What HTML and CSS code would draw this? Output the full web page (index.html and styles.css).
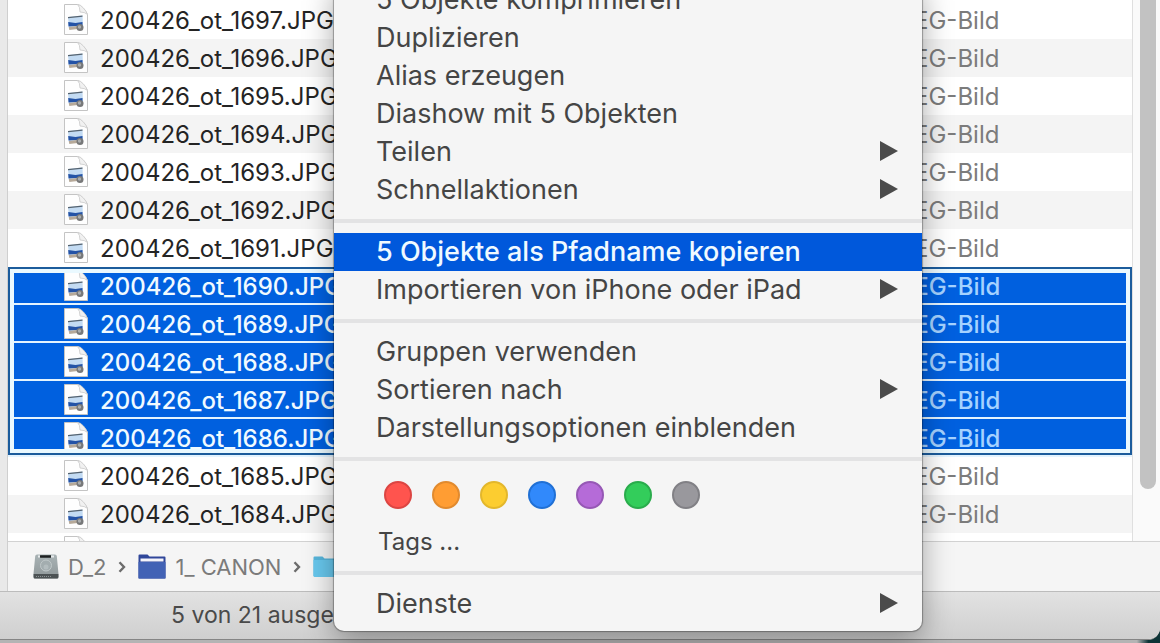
FILE: index.html
```html
<!DOCTYPE html>
<html lang="de">
<head>
  <meta charset="UTF-8">
  <meta name="viewport" content="width=device-width, initial-scale=1.0">
  <title>1_ CANON</title>
  <link rel="stylesheet" href="styles.css">
</head>
<body>

  <svg class="sprite" aria-hidden="true">
    <symbol id="jpg" viewBox="0 0 24 31">
      <path d="M.5 .5h13q3 .5 6 4t4 6v20H.5z" fill="#fefefe" stroke="#c4c4c4"/>
      <path d="M13.500 .5q2.500 2 2.500 7.500 5 0 7.500 2.500-1-3-4-6.500t-6-3.500z" fill="#f1f1f1" stroke="#c9c9c9" stroke-width=".8"/>
      <path d="M4 13l14.500-1.500.5 11-14 2z" fill="#c3dbf3"/>
      <path d="M4 13l14.500-1.500v1.200l-14.500 1.500z" fill="#56636f"/>
      <path d="M4.200 18l7.300 1 7-1v3.500l-14 1z" fill="#2453a6"/>
      <path d="M4.800 23l8-1 1 3-8.500 1z" fill="#b6a999"/>
      <circle cx="16" cy="23.500" r="3.500" fill="#777879"/>
      <circle cx="15.500" cy="23" r="1.700" fill="#aaaeb0"/>
    </symbol>
    <symbol id="chevron" viewBox="0 0 8 12">
      <path d="M1.500 1.200L6 6l-4.500 4.800" fill="none" stroke="#6c6c6c" stroke-width="2.400"/>
    </symbol>
  </svg>

  <div class="window">
    <div class="content">
      <div class="browser">
        <div class="list">
          <table class="files">
            <tbody>
              <tr><td><svg class="file-icon"><use href="#jpg"/></svg>200426_ot_1697.JPG</td><td class="kind">JPEG-Bild</td></tr>
              <tr><td><svg class="file-icon"><use href="#jpg"/></svg>200426_ot_1696.JPG</td><td class="kind">JPEG-Bild</td></tr>
              <tr><td><svg class="file-icon"><use href="#jpg"/></svg>200426_ot_1695.JPG</td><td class="kind">JPEG-Bild</td></tr>
              <tr><td><svg class="file-icon"><use href="#jpg"/></svg>200426_ot_1694.JPG</td><td class="kind">JPEG-Bild</td></tr>
              <tr><td><svg class="file-icon"><use href="#jpg"/></svg>200426_ot_1693.JPG</td><td class="kind">JPEG-Bild</td></tr>
              <tr><td><svg class="file-icon"><use href="#jpg"/></svg>200426_ot_1692.JPG</td><td class="kind">JPEG-Bild</td></tr>
              <tr><td><svg class="file-icon"><use href="#jpg"/></svg>200426_ot_1691.JPG</td><td class="kind">JPEG-Bild</td></tr>
            </tbody>
            <tbody class="selected">
              <tr><td><svg class="file-icon"><use href="#jpg"/></svg>200426_ot_1690.JPG</td><td class="kind">JPEG-Bild</td></tr>
              <tr><td><svg class="file-icon"><use href="#jpg"/></svg>200426_ot_1689.JPG</td><td class="kind">JPEG-Bild</td></tr>
              <tr><td><svg class="file-icon"><use href="#jpg"/></svg>200426_ot_1688.JPG</td><td class="kind">JPEG-Bild</td></tr>
              <tr><td><svg class="file-icon"><use href="#jpg"/></svg>200426_ot_1687.JPG</td><td class="kind">JPEG-Bild</td></tr>
              <tr><td><svg class="file-icon"><use href="#jpg"/></svg>200426_ot_1686.JPG</td><td class="kind">JPEG-Bild</td></tr>
            </tbody>
            <tbody>
              <tr><td><svg class="file-icon"><use href="#jpg"/></svg>200426_ot_1685.JPG</td><td class="kind">JPEG-Bild</td></tr>
              <tr><td><svg class="file-icon"><use href="#jpg"/></svg>200426_ot_1684.JPG</td><td class="kind">JPEG-Bild</td></tr>
              <tr><td><svg class="file-icon"><use href="#jpg"/></svg></td><td class="kind"></td></tr>
            </tbody>
          </table>
          <div class="scrollbar"><div class="thumb"></div></div>
        </div>

        <nav class="path">
          <svg class="drive" viewBox="0 0 26 25">
            <defs>
              <linearGradient id="metal" x1="0" y1="0" x2="0" y2="1">
                <stop offset="0" stop-color="#a9b3b5"/>
                <stop offset="1" stop-color="#8f9799"/>
              </linearGradient>
            </defs>
            <path d="M4 .5h18q1.500 0 1.800 1.500L25.500 20v3q0 1.500-1.500 1.500H2Q.5 24.500.5 23v-3L2.200 2Q2.500 .5 4 .5z" fill="url(#metal)"/>
            <path d="M.6 20h24.800v3q0 1.500-1.400 1.500H2Q.6 24.500.6 23z" fill="#4c5254"/>
            <path d="M5 1.500h3v2H5zM18 1.500h3v2h-3z" fill="#e6eaeb"/>
            <path d="M7 2.500h11" stroke="#1d2021" stroke-width="2.500"/>
            <circle cx="13" cy="11.500" r="5.500" fill="#a3adaf" stroke="#c0c8c9"/>
            <circle cx="13" cy="13" r="2.500" fill="#b4bdbf"/>
            <path d="M3 22.500h15" stroke="#8d9496" stroke-dasharray="1 1"/>
          </svg>
          <a href="#">D_2</a>
          <svg class="chevron"><use href="#chevron"/></svg>
          <svg class="folder" viewBox="0 0 28 25">
            <path d="M.5 24.500V1.500Q.5 .5 1.500 .5h8l2 2h15q1 0 1 1v21z" fill="#30479a"/>
            <path d="M2.500 4.500h23v3h-23z" fill="#f4f4fa"/>
            <path d="M.5 8h27v15.500q0 1-1 1h-25q-1 0-1-1z" fill="#4262b5"/>
          </svg>
          <a href="#">1_ CANON</a>
          <svg class="chevron"><use href="#chevron"/></svg>
          <svg class="folder" viewBox="0 0 28 25">
            <path d="M.5 22V3.500q0-1 1-1h8l2 2h15q1 0 1 1V22z" fill="#57b6dc"/>
            <path d="M.5 6h27v16q0 1-1 1h-25q-1 0-1-1z" fill="#68c8ee"/>
          </svg>
        </nav>
      </div>
    </div>

    <footer class="status">5 von 21 ausgewählt</footer>
  </div>

  <div class="menu" role="menu">
    <button class="item" role="menuitem">5 Objekte komprimieren</button>
    <button class="item" role="menuitem">Duplizieren</button>
    <button class="item" role="menuitem">Alias erzeugen</button>
    <button class="item" role="menuitem">Diashow mit 5 Objekten</button>
    <button class="item more" role="menuitem">Teilen</button>
    <button class="item more" role="menuitem">Schnellaktionen</button>
    <hr>
    <button class="item active" role="menuitem">5 Objekte als Pfadname kopieren</button>
    <button class="item more" role="menuitem">Importieren von iPhone oder iPad</button>
    <hr>
    <button class="item" role="menuitem">Gruppen verwenden</button>
    <button class="item more" role="menuitem">Sortieren nach</button>
    <button class="item" role="menuitem">Darstellungsoptionen einblenden</button>
    <hr>
    <div class="tags">
      <button class="tag red" aria-label="Rot"></button>
      <button class="tag orange" aria-label="Orange"></button>
      <button class="tag yellow" aria-label="Gelb"></button>
      <button class="tag blue" aria-label="Blau"></button>
      <button class="tag purple" aria-label="Lila"></button>
      <button class="tag green" aria-label="Grün"></button>
      <button class="tag gray" aria-label="Grau"></button>
    </div>
    <button class="item tags-label" role="menuitem">Tags ...</button>
    <hr>
    <button class="item more" role="menuitem">Dienste</button>
  </div>

</body>
</html>
```

FILE: styles.css
```css
* {
  box-sizing: border-box;
}

body {
  margin: 0;
  height: 100vh;
  position: relative;
  overflow: hidden;
  background: linear-gradient(90deg, #b4b4b4 98%, #0d3437 99%);
  font-family: Inter, "Liberation Sans", sans-serif;
  color: #242424;
}

.sprite {
  position: absolute;
  width: 0;
  height: 0;
}

.window {
  display: flex;
  flex-direction: column;
  height: calc(100vh - 3px);
  overflow: hidden;
  background: #fff;
  border-bottom: 1px solid #858585;
  border-bottom-right-radius: 12px;
}

.content {
  display: flex;
  flex: 1;
  min-height: 0;
  padding-left: 7px;
  background: #e9e9e9;
}

.browser {
  display: flex;
  flex: 1;
  flex-direction: column;
  min-width: 0;
  border-left: 1px solid #cfcfcf;
}

/* file list */
.list {
  display: flex;
  flex: 1;
  min-height: 0;
  overflow: hidden;
  padding-top: 1px;
  background: #fff;
}

.files {
  flex: 1;
  height: max-content;
  table-layout: fixed;
  border-collapse: separate;
  border-spacing: 0;
  font-size: 24px;
}

.files tr {
  height: 38px;
}

.files tr:nth-child(even) {
  background: #f4f4f4;
}

.files td {
  height: 38px;
  padding: 2px 0 0 56px;
  line-height: 36px;
  white-space: nowrap;
}

.files .kind {
  width: 247px;
  padding-left: 0;
  color: #7c7c7c;
}

.file-icon {
  width: 24px;
  height: 31px;
  margin-right: 12px;
  vertical-align: -6px;
}

.files .selected {
  position: relative;
}

.files .selected tr {
  background: #0060df;
  color: #f0faff;
  font-weight: 500;
}

.files .selected td {
  padding-top: 3px;
  border-bottom: 2px solid #e4f4ff;
  line-height: 33px;
}

.files .selected .kind {
  color: #a5d2ff;
}

.selected::after {
  content: "";
  position: absolute;
  inset: 0 0 2px;
  border: 2px solid #1c5c9c;
  box-shadow: inset 0 0 0 4px #eaf9ff;
}

.scrollbar {
  width: 28px;
  margin-top: -1px;
  padding: 0 4px 52px 7px;
  background: #fafafa;
  border-left: 1px solid #dfdfdf;
}

.thumb {
  height: 100%;
  border-radius: 0 0 8px 8px;
  background: #c2c2c2;
}

/* path bar */
.path {
  display: flex;
  align-items: center;
  gap: 9px;
  height: 50px;
  padding-left: 25px;
  background: #f5f5f5;
  border-top: 1px solid #d2d2d2;
  font-size: 22px;
}

.path a {
  color: #7b7b7b;
  text-decoration: none;
  white-space: nowrap;
}

.drive {
  width: 26px;
  height: 25px;
}

.folder {
  width: 28px;
  height: 25px;
}

.chevron {
  width: 8px;
  height: 12px;
  margin: 0 3px;
}

.status {
  height: 48px;
  padding-left: 171px;
  border-top: 1px solid #bcbcbc;
  background: linear-gradient(#e2e2e2, #cfcfcf);
  color: #4a4a4a;
  font-size: 23px;
  line-height: 46px;
}

/* context menu */
.menu {
  position: absolute;
  left: 334px;
  bottom: 12px;
  width: 588px;
  padding-bottom: 8px;
  border-radius: 0 0 10px 10px;
  background: #f5f5f5;
  box-shadow: 0 0 1px 1px rgba(0, 0, 0, 0.3), 0 10px 30px rgba(0, 0, 0, 0.35);
}

.item {
  display: flex;
  align-items: center;
  justify-content: space-between;
  width: 100%;
  height: 38px;
  padding: 0 24px 2px 42px;
  border: 0;
  background: none;
  color: #454545;
  font-family: inherit;
  font-size: 27px;
  text-align: left;
}

.more::after {
  content: "";
  border-left: 18px solid #4b4b4b;
  border-top: 10px solid transparent;
  border-bottom: 10px solid transparent;
}

.active {
  background: #0058db;
  color: #f0faff;
  font-weight: 500;
}

.menu hr {
  height: 4px;
  margin: 10px 0;
  border: 0;
  background: #e3e3e4;
}

.tags {
  display: flex;
  gap: 20px;
  padding: 10px 50px 14px;
}

.tag {
  width: 28px;
  height: 28px;
  padding: 0;
  border: 2px solid;
  border-radius: 50%;
}

.tags-label {
  padding-left: 44px;
  font-size: 24px;
}

.red {
  background: #ff544e;
  border-color: #dc4542;
}

.orange {
  background: #ff9d33;
  border-color: #e18a2e;
}

.yellow {
  background: #fccd30;
  border-color: #e3b72c;
}

.blue {
  background: #3189fb;
  border-color: #2070d5;
}

.purple {
  background: #b56bd8;
  border-color: #9658b5;
}

.green {
  background: #33cd5b;
  border-color: #2aac4c;
}

.gray {
  background: #99989d;
  border-color: #818085;
}
```
